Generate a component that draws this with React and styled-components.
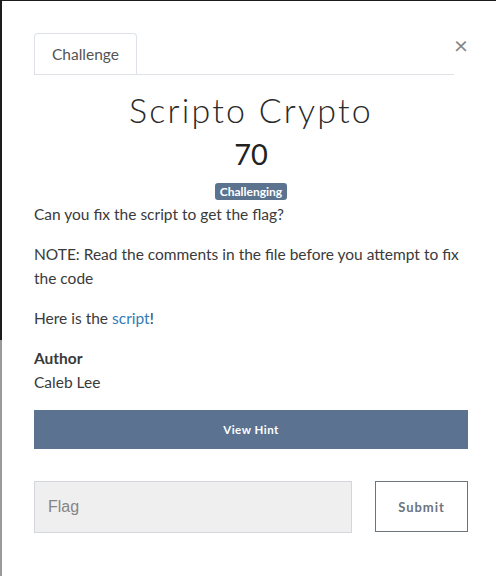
import React from "react";
import styled, { createGlobalStyle } from "styled-components";

const Global = createGlobalStyle`
  html, body { margin: 0; padding: 0; }
  body {
    background: linear-gradient(to bottom, #1c1c1c 0, #1c1c1c 340px, #9a9a9a 340px, #9a9a9a 100%);
    font-family: Lato, "Open Sans", sans-serif;
    overflow: hidden;
  }
`;

const Modal = styled.div`
  margin: 1px 0 0 2px;
  height: 575px;
  background: #fff;
  padding: 32px 28px 0 32px;
  box-sizing: border-box;
  display: flex;
  flex-direction: column;
`;

const Header = styled.div`
  display: flex;
  align-items: flex-start;
`;

const Nav = styled.div`
  flex: 1;
  display: flex;
  border-bottom: 1px solid #dee2e6;
`;

const Tab = styled.div`
  height: 40px;
  padding: 0 17px;
  display: flex;
  align-items: center;
  border: 1px solid #dee2e6;
  border-bottom: none;
  border-radius: 4px 4px 0 0;
  font-size: 15.5px;
  color: #555;
`;

const Close = styled.button`
  width: 14px;
  border: none;
  background: none;
  padding: 0;
  margin-top: 1px;
  font-family: Lato, sans-serif;
  font-size: 24px;
  line-height: 22px;
  color: #858585;
  text-align: center;
`;

const Title = styled.h2`
  margin: 15px 0 0;
  text-align: center;
  font-weight: 300;
  font-size: 34px;
  line-height: 40px;
  letter-spacing: 2.2px;
  color: #2a2a2a;
`;

const Points = styled.div`
  margin-top: 6px;
  text-align: center;
  font-weight: 400;
  font-size: 29px;
  line-height: 36px;
  color: #222;
`;

const BadgeRow = styled.div`
  display: flex;
  justify-content: center;
  margin-top: 11px;
`;

const Badge = styled.span`
  display: inline-block;
  background: #5c7390;
  color: #fff;
  font-weight: 700;
  font-size: 12px;
  line-height: 17px;
  height: 17px;
  padding: 0 5px;
  border-radius: 3px;
`;

const Description = styled.div`
  margin-top: 2px;
  color: #3a3a3a;
  font-size: 15.5px;
  line-height: 24px;
`;

const P = styled.p`
  margin: 0 0 16px;
`;

const Link = styled.a`
  color: #337ab7;
  text-decoration: none;
`;

const AuthorLabel = styled.div`
  font-weight: 700;
`;

const HintButton = styled.button`
  margin-top: 16px;
  height: 39px;
  width: 100%;
  border: none;
  background: #5b7290;
  color: #fff;
  font-family: Lato, sans-serif;
  font-weight: 700;
  font-size: 11.5px;
  letter-spacing: 0.5px;
`;

const SubmitRow = styled.div`
  margin-top: 32px;
  display: flex;
  align-items: flex-start;
  gap: 23px;
`;

const FlagInput = styled.input`
  flex: 0 0 318px;
  height: 52px;
  box-sizing: border-box;
  background: #efefef;
  border: 1px solid #d3d6da;
  padding: 0 13px;
  font-family: "Liberation Sans", Arial, sans-serif;
  font-size: 16px;
  color: #333;
  &::placeholder { color: #858585; }
`;

const SubmitButton = styled.button`
  flex: 1;
  height: 51px;
  background: #fff;
  border: 1px solid #6c757d;
  color: #6c757d;
  font-family: Lato, sans-serif;
  font-weight: 700;
  font-size: 13px;
  letter-spacing: 1px;
`;

export default function App() {
  return (
    <>
      <Global />
      <Modal>
        <Header>
          <Nav>
            <Tab>Challenge</Tab>
          </Nav>
          <Close>×</Close>
        </Header>
        <Title>Scripto Crypto</Title>
        <Points>70</Points>
        <BadgeRow>
          <Badge>Challenging</Badge>
        </BadgeRow>
        <Description>
          <P>Can you fix the script to get the flag?</P>
          <P>NOTE: Read the comments in the file before you attempt to fix the code</P>
          <P>
            Here is the <Link href="#">script</Link>!
          </P>
          <AuthorLabel>Author</AuthorLabel>
          <div>Caleb Lee</div>
        </Description>
        <HintButton>View Hint</HintButton>
        <SubmitRow>
          <FlagInput placeholder="Flag" />
          <SubmitButton>Submit</SubmitButton>
        </SubmitRow>
      </Modal>
    </>
  );
}
